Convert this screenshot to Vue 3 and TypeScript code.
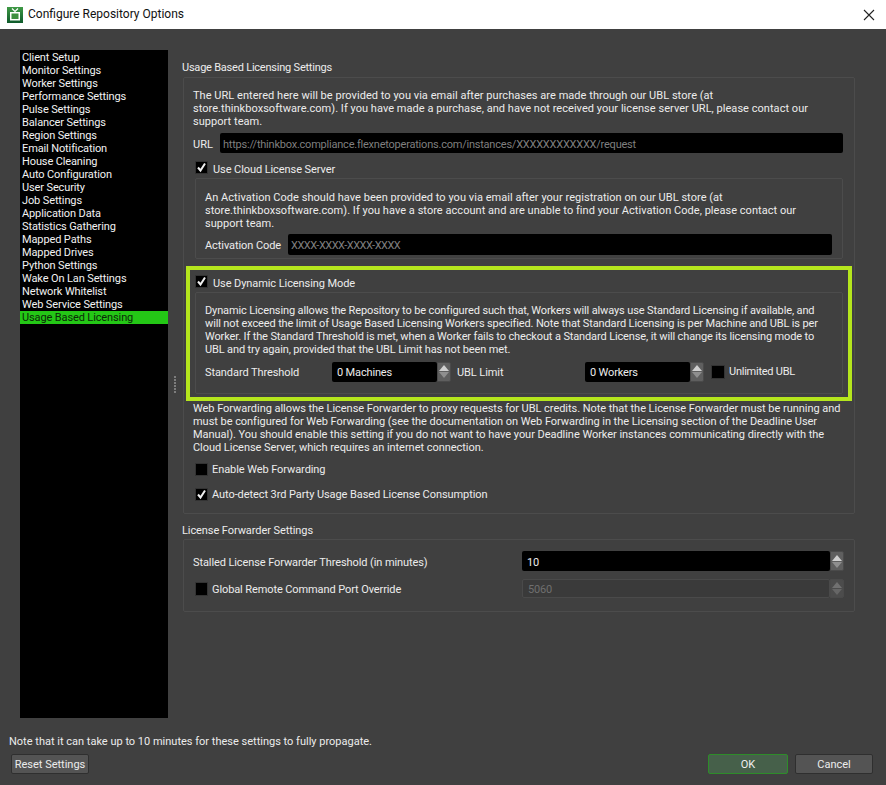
<script setup lang="ts">
const nav: string[] = ['Client Setup','Monitor Settings','Worker Settings','Performance Settings','Pulse Settings','Balancer Settings','Region Settings','Email Notification','House Cleaning','Auto Configuration','User Security','Job Settings','Application Data','Statistics Gathering','Mapped Paths','Mapped Drives','Python Settings','Wake On Lan Settings','Network Whitelist','Web Service Settings','Usage Based Licensing']
const urlText = ['The URL entered here will be provided to you via email after purchases are made through our UBL store (at','store.thinkboxsoftware.com). If you have made a purchase, and have not received your license server URL, please contact our','support team.']
const codeText = ['An Activation Code should have been provided to you via email after your registration on our UBL store (at','store.thinkboxsoftware.com). If you have a store account and are unable to find your Activation Code, please contact our','support team.']
const dynText = ['Dynamic Licensing allows the Repository to be configured such that, Workers will always use Standard Licensing if available, and','will not exceed the limit of Usage Based Licensing Workers specified. Note that Standard Licensing is per Machine and UBL is per','Worker. If the Standard Threshold is met, when a Worker fails to checkout a Standard License, it will change its licensing mode to','UBL and try again, provided that the UBL Limit has not been met.']
const webText = ['Web Forwarding allows the License Forwarder to proxy requests for UBL credits. Note that the License Forwarder must be running and','must be configured for Web Forwarding (see the documentation on Web Forwarding in the Licensing section of the Deadline User','Manual). You should enable this setting if you do not want to have your Deadline Worker instances communicating directly with the','Cloud License Server, which requires an internet connection.']
</script>

<template>
  <div class="window">
    <header class="titlebar">
      <svg class="appicon" width="16" height="16" viewBox="0 0 16 16">
        <defs>
          <linearGradient id="tv" x1="0" y1="0" x2="0" y2="1">
            <stop offset="0" stop-color="#3f9a45"/>
            <stop offset="1" stop-color="#0e5a2b"/>
          </linearGradient>
        </defs>
        <rect width="16" height="16" fill="url(#tv)"/>
        <path d="M5 1.5 L8 4.5 L11 1.5" stroke="#fff" stroke-width="1.2" fill="none"/>
        <rect x="3" y="5" width="10" height="8.5" fill="#fff"/>
        <rect x="4.5" y="6.5" width="7" height="5.5" fill="#3d8f3f"/>
      </svg>
      <span class="title">Configure Repository Options</span>
      <svg class="close" width="12" height="12" viewBox="0 0 12 12">
        <path d="M1 1 L11 11 M11 1 L1 11" stroke="#222" stroke-width="1.1" fill="none"/>
      </svg>
    </header>

    <main class="body">
      <div class="panes">
        <ul class="nav">
          <li v-for="item in nav" :key="item" :class="{ selected: item === 'Usage Based Licensing' }">{{ item }}</li>
        </ul>
        <div class="splitter"><i v-for="n in 6" :key="n"></i></div>

        <section class="settings">
          <h2 class="legend">Usage Based Licensing Settings</h2>
          <div class="group main-group">
            <p class="para top-para intro"><span v-for="l in urlText" :key="l">{{ l }}</span></p>
            <div class="url-row">
              <label class="url-label">URL</label>
              <div class="field ph url-ph grow">https://thinkbox.compliance.flexnetoperations.com/instances/XXXXXXXXXXXX/request</div>
            </div>
            <div class="check-row cloud">
              <span class="check"><svg width="11" height="11" viewBox="0 0 11 11"><path d="M2 5.5 L4.5 8.5 L9 1.5" stroke="#f0f0f0" stroke-width="2" fill="none"/></svg></span>Use Cloud License Server
            </div>
            <div class="group sub cloud-sub">
              <p class="para intro"><span v-for="l in codeText" :key="l">{{ l }}</span></p>
              <div class="code-row">
                <label class="code-label">Activation Code</label>
                <div class="field ph code-ph grow">XXXX-XXXX-XXXX-XXXX</div>
              </div>
            </div>

            <div class="highlight">
              <div class="check-row dyn">
                <span class="check"><svg width="11" height="11" viewBox="0 0 11 11"><path d="M2 5.5 L4.5 8.5 L9 1.5" stroke="#f0f0f0" stroke-width="2" fill="none"/></svg></span>Use Dynamic Licensing Mode
              </div>
              <div class="group sub dyn-sub">
                <p class="para"><span v-for="l in dynText" :key="l">{{ l }}</span></p>
                <div class="threshold-row">
                  <label class="l1">Standard Threshold</label>
                  <div class="spin s1"><div class="field grow">0 Machines</div><div class="arrows"><b class="up"></b><b class="down"></b></div></div>
                  <label class="l2">UBL Limit</label>
                  <div class="spin s2"><div class="field grow">0 Workers</div><div class="arrows"><b class="up"></b><b class="down"></b></div></div>
                  <span class="check small"></span>
                  <label class="unl">Unlimited UBL</label>
                </div>
              </div>
            </div>

            <p class="para top-para web-para"><span v-for="l in webText" :key="l">{{ l }}</span></p>
            <div class="check-row web web1"><span class="check"></span>Enable Web Forwarding</div>
            <div class="check-row web web2">
              <span class="check"><svg width="11" height="11" viewBox="0 0 11 11"><path d="M2 5.5 L4.5 8.5 L9 1.5" stroke="#f0f0f0" stroke-width="2" fill="none"/></svg></span>Auto-detect 3rd Party Usage Based License Consumption
            </div>
          </div>

          <h2 class="legend second">License Forwarder Settings</h2>
          <div class="group fwd-group">
            <div class="fwd-row">
              <label class="fl">Stalled License Forwarder Threshold (in minutes)</label>
              <div class="spin s3"><div class="field grow">10</div><div class="arrows"><b class="up"></b><b class="down"></b></div></div>
            </div>
            <div class="fwd-row r2">
              <label class="fl"><span class="check small2"></span>Global Remote Command Port Override</label>
              <div class="spin s3 disabled"><div class="field grow">5060</div><div class="arrows"><b class="up"></b><b class="down"></b></div></div>
            </div>
          </div>
        </section>
      </div>

      <footer class="footer">
        <p class="note">Note that it can take up to 10 minutes for these settings to fully propagate.</p>
        <div class="buttons">
          <button class="btn reset">Reset Settings</button>
          <span class="spacer"></span>
          <button class="btn ok">OK</button>
          <button class="btn cancel">Cancel</button>
        </div>
      </footer>
    </main>
  </div>
</template>

<style>
html, body { margin: 0; background: #404040; }
</style>

<style scoped>
.window { width: 886px; height: 785px; display: flex; flex-direction: column; overflow: hidden; background: #404040; color: #ececec; font: 11px/13px Roboto, "Noto Sans", sans-serif; }
.titlebar { height: 29px; background: #fff; color: #111; display: flex; align-items: center; padding: 0 11px 0 7px; box-sizing: border-box; font-size: 12px; }
.appicon { margin-right: 5px; }
.title { flex: 1; }
.body { flex: 1; display: flex; flex-direction: column; }
.panes { display: flex; height: 700px; padding: 21px 0 0 20px; box-sizing: border-box; }
.nav { list-style: none; margin: 0; padding: 1px 0 0; width: 148px; height: 668px; background: #000; box-sizing: border-box; flex: none; letter-spacing: -0.12px; }
.nav li { height: 13px; padding-left: 2px; white-space: nowrap; color: #f2f2f2; }
.nav li.selected { background: #24c716; color: #0b2a08; }
.splitter { width: 14px; flex: none; display: flex; flex-direction: column; align-items: center; justify-content: center; gap: 1px; height: 668px; box-sizing: border-box; }
.splitter i { width: 2px; height: 2px; background: #7d7d7d; display: block; }
.settings { width: 673px; flex: none; }
.legend { font: inherit; margin: 0; padding-top: 11px; height: 27px; box-sizing: border-box; white-space: nowrap; letter-spacing: -0.22px; }
.legend.second { padding-top: 10px; height: 25px; letter-spacing: -0.08px; }
.group { border: 1px solid #4c4c4c; border-radius: 2px; box-sizing: border-box; }
.main-group { margin-left: 1px; width: 672px; height: 437px; padding: 11px 3px 0; }
.para { margin: 0; padding: 0 0 0 7px; }
.top-para { padding-left: 6px; }
.intro { letter-spacing: 0.04px; }
.para span { display: block; white-space: nowrap; }
.url-row { display: flex; align-items: center; height: 20px; margin: 5px 8px 0 6px; }
.url-label { width: 27px; flex: none; padding-top: 2px; }
.field { background: #000; border-radius: 2px; height: 100%; display: flex; align-items: center; padding: 2px 0 0 5px; box-sizing: border-box; white-space: nowrap; letter-spacing: -0.15px; }
.grow { flex: 1; min-width: 0; }
.ph { color: #7f7f7f; padding-left: 3px; }
.url-ph { letter-spacing: -0.22px; }
.code-ph { letter-spacing: -0.5px; }
.check-row { display: flex; align-items: flex-start; white-space: nowrap; box-sizing: border-box; padding-top: 2px; letter-spacing: -0.08px; }
.check { width: 11px; height: 11px; flex: none; background: #000; border: 1px solid #333; display: inline-flex; align-items: center; justify-content: center; margin: -2px 5px 0 0; border-radius: 1px; }
.cloud { margin: 8px 0 0 8px; height: 16px; }
.sub { margin-left: 9px; width: 648px; }
.cloud-sub { height: 81px; margin-top: 1px; padding: 12px 0 0 2px; margin-left: 8px; }
.code-row { display: flex; align-items: center; height: 21px; margin: 4px 10px 0 7px; }
.code-label { width: 83px; flex: none; padding-top: 2px; letter-spacing: -0.08px; }
.highlight { margin: 7px 0 0 -1px; width: 666px; height: 135px; box-sizing: border-box; border: 4.5px solid #b5e61d; padding: 4.5px 0 0 5px; }
.dyn { height: 15px; }
.dyn-sub { width: 648px; margin: 2px 0 0 0; height: 102px; padding: 11px 0 0 2px; }
.dyn-sub .para { letter-spacing: -0.13px; }
.threshold-row { display: flex; align-items: center; height: 20px; margin: 6px 0 0 7px; white-space: nowrap; letter-spacing: -0.08px; }
.l1 { width: 127px; flex: none; padding-top: 2px; }
.l2 { margin-left: 6px; width: 128px; flex: none; padding-top: 2px; }
.unl { letter-spacing: -0.25px; }
.spin { display: flex; height: 100%; flex: none; }
.s1, .s2 { width: 119px; }
.check.small { width: 12px; height: 12px; margin: 0 4px 0 7px; }
.arrows { width: 14px; flex: none; background: #5f5f5f; border: 1px solid #4a4a4a; box-sizing: border-box; border-radius: 0 2px 2px 0; display: flex; flex-direction: column; align-items: center; justify-content: center; gap: 1px; }
.arrows .up { width: 0; height: 0; border: 5px solid transparent; border-top: 0; border-bottom: 6px solid #cfcfcf; }
.arrows .down { width: 0; height: 0; border: 5px solid transparent; border-bottom: 0; border-top: 6px solid #8f8f8f; }
.web-para { margin-top: 1px; letter-spacing: -0.04px; }
.web { align-items: center; padding-top: 0; height: 14px; }
.web .check { margin: 0 4px 0 0; }
.web1 { margin: 8px 0 0 8px; }
.web2 { margin: 11px 0 0 8px; }
.fwd-group { margin-left: 1px; width: 672px; height: 73px; padding: 11px 0 0 9px; }
.fwd-row { display: flex; align-items: center; height: 20px; }
.fwd-row.r2 { margin-top: 8px; height: 19px; }
.fl { width: 329px; flex: none; display: flex; align-items: center; white-space: nowrap; padding-top: 2px; box-sizing: border-box; letter-spacing: -0.1px; }
.s3 { width: 322px; }
.check.small2 { width: 11px; height: 12px; margin: -2px 4px 0 2px; }
.disabled .field { background: #3a3a3a; color: #6f6f6f; border: 1px solid #4a4a4a; }
.disabled .arrows { background: #4c4c4c; }
.disabled .arrows .up { border-bottom-color: #717171; }
.disabled .arrows .down { border-top-color: #666; }
.footer { padding: 0 13px 0 9px; }
.note { margin: 0; padding-top: 6px; height: 19px; box-sizing: border-box; white-space: nowrap; }
.buttons { display: flex; align-items: center; margin-top: 6px; padding-left: 2px; }
.spacer { flex: 1; }
.btn { font: inherit; color: #ececec; height: 20px; width: 78px; background: #545454; border: 1px solid #2f2f2f; border-radius: 2px; padding: 0; margin: 0; }
.ok { width: 80px; background: #46604a; border: 1.5px solid #2e8c2a; color: #f0f0f0; }
.cancel { margin-left: 7px; }
</style>
